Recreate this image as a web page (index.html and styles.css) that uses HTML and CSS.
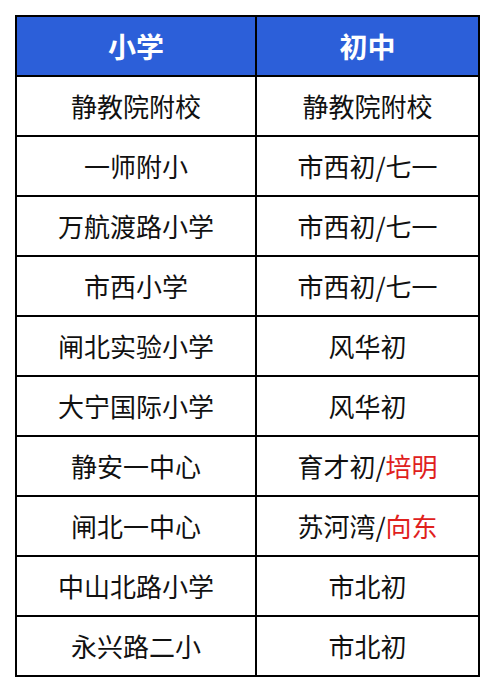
FILE: index.html
```html
<!DOCTYPE html>
<html lang="zh">
<head>
<meta charset="utf-8">
<link rel="stylesheet" href="styles.css">
</head>
<body>
<div class="table">
  <div class="cell head">小学</div><div class="cell head">初中</div>
  <div class="cell">静教院附校</div><div class="cell">静教院附校</div>
  <div class="cell">一师附小</div><div class="cell">市西初/七一</div>
  <div class="cell">万航渡路小学</div><div class="cell">市西初/七一</div>
  <div class="cell">市西小学</div><div class="cell">市西初/七一</div>
  <div class="cell">闸北实验小学</div><div class="cell">风华初</div>
  <div class="cell">大宁国际小学</div><div class="cell">风华初</div>
  <div class="cell">静安一中心</div><div class="cell">育才初/<span class="red">培明</span></div>
  <div class="cell">闸北一中心</div><div class="cell">苏河湾/<span class="red">向东</span></div>
  <div class="cell">中山北路小学</div><div class="cell">市北初</div>
  <div class="cell">永兴路二小</div><div class="cell">市北初</div>
</div>
</body>
</html>
```
FILE: styles.css
```css
html, body {
  margin: 0;
  padding: 0;
  background: #ffffff;
}
body {
  padding: 15px 0 0 15px;
  font-family: "Noto Sans CJK SC", "Noto Sans", sans-serif;
}
.table {
  display: grid;
  grid-template-columns: 238px 221px;
  grid-auto-rows: 58px;
  gap: 2px;
  padding: 2px;
  background: #000000;
  width: max-content;
}
.cell {
  background: #ffffff;
  display: flex;
  align-items: center;
  justify-content: center;
  font-size: 26px;
  color: #111111;
  line-height: 1;
}
.head {
  background: #2c5fd9;
  color: #ffffff;
  font-weight: 700;
  font-size: 28px;
}
.red {
  color: #e0201c;
}
```
